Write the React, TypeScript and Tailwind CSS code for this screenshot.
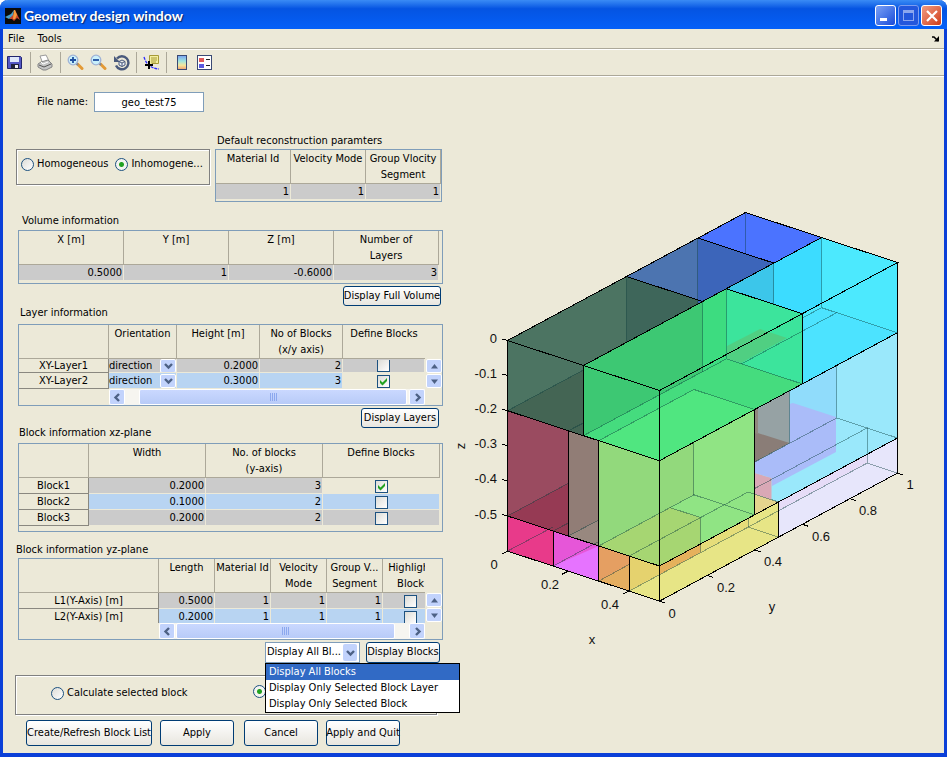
import React from "react";

type Tone = "gray" | "blue" | "none";
type Cell = { kind: "num" | "check" | "select"; value?: string; on?: boolean; tone: Tone };
type Column = { width: string; lines: string[]; open?: boolean };
type Row = { label?: string; cells: Cell[]; short?: boolean };

const toneClass: Record<Tone, string> = {
  gray: "bg-[#cbcbcb]",
  blue: "bg-[#b8d4f2]",
  none: "",
};

const num = (value: string, tone: Tone = "gray"): Cell => ({ kind: "num", value, tone });
const check = (on: boolean, tone: Tone = "gray"): Cell => ({ kind: "check", on, tone });

function Chevron({ dir }: { dir: "down" | "left" | "right" }) {
  const d = { down: "M2 4l3.5 3.5L9 4", left: "M7 2L3.5 5.5L7 9", right: "M4 2l3.5 3.5L4 9" }[dir];
  return (
    <svg viewBox="0 0 11 11" className="size-[11px]" aria-hidden="true">
      <path d={d} fill="none" stroke="#4d6185" strokeWidth="2.4" />
    </svg>
  );
}

function CheckBox({ on, label }: { on?: boolean; label: string }) {
  return (
    <span className="relative block size-[13px] shrink-0">
      <input
        type="checkbox"
        defaultChecked={on}
        aria-label={label}
        className="block size-[13px] appearance-none border border-[#1c5180] bg-linear-to-br from-[#dcdcd7] to-white"
      />
      {on && (
        <svg viewBox="0 0 13 13" className="pointer-events-none absolute inset-0 size-[13px]" aria-hidden="true">
          <path d="M3 5v3l2.5 2.5L10 6V3L5.500 7.500Z" fill="#21a121" />
        </svg>
      )}
    </span>
  );
}

function DirectionSelect({ short }: { short?: boolean }) {
  return (
    <span className={"flex items-center justify-between overflow-hidden " + (short ? "h-[13px]" : "h-[15px]")}>
      <select aria-label="Orientation" className="h-[15px] w-[50px] appearance-none bg-transparent text-[11px] leading-[15px]">
        <option>direction</option>
      </select>
      <span className="flex h-[14px] w-4 shrink-0 items-center justify-center rounded-xs border border-white bg-[#c2d3fc]">
        <Chevron dir="down" />
      </span>
    </span>
  );
}

function GridTable({ caption, width, columns, rows }: { caption: string; width: string; columns: Column[]; rows: Row[] }) {
  const labelled = rows[0].label !== undefined;
  return (
    <table aria-label={caption} className={"shrink-0 table-fixed border-separate border-spacing-0 " + width}>
      <colgroup>
        {columns.map((c, i) => (
          <col key={i} className={c.width} />
        ))}
      </colgroup>
      <thead>
        <tr className="h-[34px]">
          {columns.map((c, i) => (
            <th
              key={i}
              className={
                "border-b border-[#aca899] p-0 pt-px text-center align-top font-normal leading-4 whitespace-nowrap " +
                (c.open ? "" : "border-r")
              }
            >
              {c.lines.map((l) => (
                <div key={l}>{l}</div>
              ))}
            </th>
          ))}
        </tr>
      </thead>
      <tbody>
        {rows.map((r, i) => (
          <tr key={i} className={r.short ? "h-[14px] leading-[13px]" : "h-4 leading-[15px]"}>
            {labelled && <th className="border-r border-b border-[#8a8880] p-0 text-center font-normal">{r.label}</th>}
            {r.cells.map((c, k) => (
              <td
                key={k}
                className={"border-r border-b border-[#ece9d8] bg-clip-padding p-0 text-right " + toneClass[c.tone]}
              >
                {c.kind === "num" && <span className="pr-px">{c.value}</span>}
                {c.kind === "check" && (
                  <span className={"flex items-end justify-center overflow-hidden " + (r.short ? "h-3" : "h-[14px]")}>
                    <CheckBox on={c.on} label={(r.label ?? caption) + " flag"} />
                  </span>
                )}
                {c.kind === "select" && <DirectionSelect short={r.short} />}
              </td>
            ))}
          </tr>
        ))}
      </tbody>
    </table>
  );
}

function Triangle({ up }: { up?: boolean }) {
  return (
    <svg viewBox="0 0 9 7" className="h-[7px] w-[9px]" aria-hidden="true">
      <path d={up ? "M4.500 1L8 5.500H1Z" : "M1 1.500H8L4.500 6Z"} fill="#4d6185" />
    </svg>
  );
}

const scrollKey = "flex items-center justify-center rounded-xs border border-white bg-[#c2d3fc]";

function VerticalScroll() {
  return (
    <div className="flex w-4 shrink-0 flex-col gap-px pt-[34px]">
      <button type="button" aria-label="Scroll up" className={scrollKey + " h-[14px] w-4"}>
        <Triangle up />
      </button>
      <button type="button" aria-label="Scroll down" className={scrollKey + " h-[14px] w-4"}>
        <Triangle />
      </button>
    </div>
  );
}

function HorizontalScroll({ className, thumb }: { className: string; thumb: string }) {
  return (
    <div className={"flex h-4 bg-[#f6f5f0] " + className}>
      <button type="button" aria-label="Scroll left" className={scrollKey + " w-4"}>
        <Chevron dir="left" />
      </button>
      <div className={"flex items-center justify-center gap-px rounded-xs border border-white bg-linear-to-b from-[#cad8ff] to-[#b8cbf8] " + thumb}>
        {[0, 1, 2, 3].map((i) => (
          <span key={i} className="h-2 w-px bg-[#8ca8ee]" />
        ))}
      </div>
      <button type="button" aria-label="Scroll right" className={scrollKey + " ml-auto w-4"}>
        <Chevron dir="right" />
      </button>
    </div>
  );
}

function XpButton({ children, className }: { children: React.ReactNode; className: string }) {
  return (
    <button
      type="button"
      className={
        "flex shrink-0 items-center justify-center rounded-[3px] border border-[#003c74] bg-linear-to-b from-white to-[#e8e6df] whitespace-nowrap " +
        className
      }
    >
      {children}
    </button>
  );
}

function Radio({ label, on, name }: { label: string; on?: boolean; name: string }) {
  return (
    <label className="flex items-center gap-[3px] whitespace-nowrap">
      <input
        type="radio"
        name={name}
        defaultChecked={on}
        className="size-[13px] shrink-0 appearance-none rounded-full border border-[#1c5180] bg-linear-to-br from-[#dcdcd7] to-white checked:bg-[radial-gradient(circle,#21a121_2px,#f4f4f0_3px)]"
      />
      {label}
    </label>
  );
}

const frame = "border border-[#7f9db9]";
const etched = "border border-[#808080] shadow-[1px_1px_0_#fff,inset_1px_1px_0_#fff]";

/* ---- toolbar ---- */

function MatlabLogo() {
  return (
    <svg viewBox="0 0 16 16" className="size-4" aria-hidden="true">
      <rect width="16" height="16" fill="#0a0a0a" />
      <path d="M0 9l4-2 2-1 3-4-1 6-4 3Z" fill="#4aa0c8" />
      <path d="M4 11l4-4 2-5 2 4 3 6-3-2-3 3-2-2Z" fill="#c8442a" />
      <path d="M9 2l1 0 2 5-2 4-2 0Z" fill="#f59a3c" />
    </svg>
  );
}

function ToolButton({ label, children }: { label: string; children: React.ReactNode }) {
  return (
    <button type="button" aria-label={label} className="size-[17px]">
      <svg viewBox="0 0 17 17" className="size-[17px]" aria-hidden="true">
        {children}
      </svg>
    </button>
  );
}

function Divider() {
  return <span className="h-[21px] w-px bg-[#aca899]" />;
}

function Magnifier({ plus }: { plus?: boolean }) {
  return (
    <>
      <path d="M10.500 10L15 14.500" stroke="#e39a35" strokeWidth="3" strokeLinecap="round" />
      <path d="M9 9l2 2" stroke="#7d8796" strokeWidth="2" />
      <circle cx="6" cy="6" r="4.800" fill="#c9f0fb" stroke="#9fb2d6" strokeWidth="1.300" />
      <path d={plus ? "M3 6h6M6 3v6" : "M3 6h6"} stroke="#1f4fa0" strokeWidth="1.800" />
    </>
  );
}

function Toolbar() {
  return (
    <div className="flex h-[27px] items-center border-b border-white pb-0.5 pl-[3px] shadow-[inset_0_-1px_0_#aca899]">
      <ToolButton label="Save">
        <path d="M1.500 2.500h13l1 1v11h-14Z" fill="#5458c4" stroke="#22266e" />
        <rect x="4" y="3" width="9" height="5" fill="#dfe8fb" />
        <rect x="5" y="10" width="8" height="5" fill="#20233a" />
        <rect x="9" y="11" width="3" height="3" fill="#f2f2f2" />
      </ToolButton>
      <div className="flex items-center gap-[6px] pl-[7px]">
        <Divider />
        <ToolButton label="Print">
          <path d="M3 2l6-1 3 6-6 3Z" fill="#fff" stroke="#9a9a9a" />
          <path d="M1 10l3-2 7-2 4 4v3l-6 3H6l-5-3Z" fill="#c4c4c4" stroke="#858585" />
          <path d="M2 11l5 2 7-3" fill="none" stroke="#555" />
          <path d="M4 8l2 2 5-2" fill="none" stroke="#fff" />
        </ToolButton>
        <Divider />
        <ToolButton label="Zoom in">
          <Magnifier plus />
        </ToolButton>
        <ToolButton label="Zoom out">
          <Magnifier />
        </ToolButton>
        <ToolButton label="Rotate 3D">
          <path d="M4 4.500a6.500 6.500 0 1 1-1 7" fill="none" stroke="#4a5a7c" strokeWidth="2.400" />
          <path d="M1 2v6h6Z" fill="#4a5a7c" />
          <path d="M6 7.500l3-1.500 3 1.500v3.500l-3 1.500L6 11ZM6 7.500l3 1.500 3-1.500M9 9v3.500" fill="#e8eef8" stroke="#4a5a7c" />
        </ToolButton>
        <Divider />
        <ToolButton label="Data cursor">
          <path d="M1 3c2 6 5 11 15 12" fill="none" stroke="#2a2aff" strokeWidth="1.300" strokeDasharray="3 1" />
          <path d="M6.500 1.500h9v8H9l-2.500 3Z" fill="#f3efa0" stroke="#a69a38" />
          <path d="M8 4h6M8 6h6M8 8h5" stroke="#a69a38" />
          <path d="M2 11h8M6 7v8" stroke="#000" strokeWidth="2" />
        </ToolButton>
        <Divider />
        <ToolButton label="Insert colorbar">
          <defs>
            <linearGradient id="cb" x1="0" y1="0" x2="0" y2="1">
              <stop offset="0" stopColor="#7aa0f0" />
              <stop offset=".4" stopColor="#9fe6e0" />
              <stop offset=".7" stopColor="#f6e79a" />
              <stop offset="1" stopColor="#f0a070" />
            </linearGradient>
          </defs>
          <rect x="4.500" y="1.500" width="9" height="14" fill="url(#cb)" stroke="#3a4a74" />
        </ToolButton>
        <ToolButton label="Insert legend">
          <rect x="1.500" y="1.500" width="14" height="14" fill="#fff" stroke="#3a4a74" />
          <rect x="3" y="4" width="5" height="4" fill="#e05a5a" />
          <rect x="3" y="10" width="5" height="4" fill="#5a5ae0" />
          <path d="M10 5.500h4M10 11.500h4" stroke="#222" />
        </ToolButton>
      </div>
    </div>
  );
}

/* ---- volume plot ---- */

type P2 = [number, number];
const at = (x: number, y: number, d: number): P2 => [507.5 + 304 * x + 238 * y, 340.5 + 100 * x - 128 * y + 351 * d];

const fills: [string, P2[]][] = [
  // top layer, left row
  ["#4c7462", [at(0, 0, 0), at(0, 0.5, 0), at(0.25, 0.5, 0), at(0.25, 0, 0), at(0.25, 0, 0.2), at(0, 0, 0.2)]],
  ["#3e665a", [at(0, 0.5, 0), at(0.25, 0.5, 0), [626.5, 342.5]]],
  ["#446554", [at(0, 0, 0.2), [583.5, 370], at(0.25, 0, 0.2)]],
  ["#4c74b0", [at(0, 0.5, 0), at(0, 0.8, 0), at(0.25, 0.8, 0), at(0.25, 0.5, 0)]],
  ["#3c65ba", [at(0, 0.8, 0), at(0.25, 0.8, 0), [698, 304]]],
  ["#4b73ff", [at(0, 0.8, 0), at(0, 1, 0), at(0.25, 1, 0), at(0.25, 0.8, 0)]],
  // top layer, cyan
  ["#4ce9fe", [at(0.25, 0.6, 0), at(0.25, 1, 0), at(0.5, 1, 0), at(0.5, 1, 0.2), at(0.5, 0.6, 0.2), at(0.5, 0.6, 0)]],
  ["#3cdcff", [at(0.25, 0.6, 0), at(0.25, 1, 0), [821.5, 303.5], at(0.5, 0.6, 0)]],
  ["#3cc6ea", [at(0.25, 0.6, 0), at(0.25, 0.8, 0), [774, 304.5]]],
  ["#4ce3ff", [[802.3, 318], at(0.25, 1, 0.2), at(0.5, 1, 0.2), at(0.5, 0.6, 0.2)]],
  // top layer, green
  ["#3ddc80", [at(0.25, 0, 0), at(0.25, 0.6, 0), at(0.5, 0.6, 0), at(0.5, 0.6, 0.2), at(0.5, 0, 0.2), at(0.25, 0, 0.2)]],
  ["#3dc873", [at(0.25, 0, 0), at(0.25, 0.5, 0), [702.5, 372], at(0.25, 0, 0.2)]],
  ["#3ce49c", [at(0.25, 0.6, 0), at(0.5, 0.6, 0), at(0.5, 0.6, 0.2), at(0.25, 0.6, 0.2)]],
  ["#45dc7e", [at(0.25, 0, 0.2), at(0.25, 0.6, 0.2), at(0.5, 0.6, 0.2), at(0.5, 0, 0.2)]],
  ["#50e680", [at(0.3, 0, 0.2), at(0.3, 0.4, 0.2), at(0.5, 0.4, 0.2), at(0.5, 0, 0.2)]],
  ["#50cf82", [[727, 346], [760, 329], [787, 338], [741, 363], [727, 359]]],
  // middle layer
  ["#9a4b60", [at(0, 0, 0.2), at(0.2, 0, 0.2), at(0.2, 0, 0.5), at(0, 0, 0.5)]],
  ["#963a54", [at(0, 0, 0.5), [568.3, 483.3], at(0.2, 0, 0.5)]],
  ["#917d76", [at(0.2, 0, 0.2), at(0.3, 0, 0.2), at(0.3, 0, 0.5), at(0.2, 0, 0.5)]],
  ["#98887f", [at(0.2, 0, 0.5), [598.7, 520], at(0.3, 0, 0.5)]],
  ["#90e484", [at(0.3, 0, 0.2), at(0.5, 0, 0.2), at(0.5, 0.4, 0.2), at(0.5, 0.4, 0.5), at(0.5, 0, 0.5), at(0.3, 0, 0.5)]],
  ["#92d97c", [at(0.3, 0, 0.2), at(0.5, 0, 0.2), [694, 442], at(0.3, 0.4, 0.5), at(0.3, 0, 0.5)]],
  ["#a6d672", [at(0.3, 0, 0.5), at(0.3, 0.3, 0.5), at(0.4, 0.3, 0.5), [700.5, 544], at(0.5, 0, 0.5)]],
  ["#9ae8fb", [at(0.5, 0.4, 0.2), at(0.5, 1, 0.2), at(0.5, 1, 0.5), at(0.5, 0.4, 0.5)]],
  ["#90dcfb", [[789.5, 391], [836.5, 366], [836.5, 418], [789.5, 443]]],
  ["#aabcf9", [[755, 462], [789.5, 443], [789.5, 404], [793, 403], [836, 417], [836, 452], [772, 486], [771.5, 478], [755, 473]]],
  ["#96a2a4", [[754.7, 410], [789.5, 391], [789.5, 443], [754.7, 462]]],
  ["#8a7d77", [[754.7, 432], [789.5, 443], [754.7, 462]]],
  ["#91887e", [[754.7, 410], [758, 408], [758, 434], [754.7, 433]]],
  ["#d9a8b6", [[754.7, 473], [771.5, 478], [771.5, 500], [754.7, 494]]],
  ["#e5d48e", [[754.7, 494], [778.5, 502], [754.7, 515]]],
  // bottom layer
  ["#e83a8a", [at(0, 0, 0.5), at(0.15, 0, 0.5), at(0.15, 0, 0.6), at(0, 0, 0.6)]],
  ["#e673ff", [at(0.15, 0, 0.5), at(0.3, 0, 0.5), at(0.3, 0, 0.6), at(0.15, 0, 0.6)]],
  ["#e656d8", [at(0.15, 0, 0.5), at(0.3, 0, 0.5), at(0.15, 0, 0.6)]],
  ["#e5ae60", [at(0.3, 0, 0.5), at(0.4, 0, 0.5), at(0.4, 0, 0.6), at(0.3, 0, 0.6)]],
  ["#e59f62", [at(0.3, 0, 0.5), at(0.4, 0, 0.5), [629, 564.5], at(0.3, 0, 0.6)]],
  ["#e7e586", [at(0.4, 0, 0.5), at(0.5, 0, 0.5), at(0.5, 0.5, 0.5), at(0.5, 0.5, 0.6), at(0.5, 0, 0.6), at(0.4, 0, 0.6)]],
  ["#e5d26e", [at(0.4, 0, 0.5), at(0.5, 0, 0.5), [659.5, 574.5], at(0.4, 0, 0.6)]],
  ["#e5dd7a", [at(0.5, 0, 0.5), [748.1, 518.5], [748.1, 527], [659.5, 574.5]]],
  ["#e5b15c", [at(0.5, 0, 0.5), [700.5, 544], [700.5, 552.5], [659.5, 574.5]]],
  ["#e7e6fb", [at(0.5, 0.5, 0.5), at(0.5, 1, 0.5), at(0.5, 1, 0.6), at(0.5, 0.5, 0.6)]],
  ["#e6dcf7", [at(0.5, 0.5, 0.5), [867.1, 454.5], [867.1, 463], [778.5, 510.5]]],
];

const hidden: P2[][] = [
  [at(0, 0.5, 0), [626.5, 342.5]],
  [at(0, 0, 0.2), [583.5, 370]],
  [at(0.2, 0, 0.2), [583.5, 423]],
  [at(0, 0.8, 0), [698, 304]],
  [at(0, 1, 0), [745.5, 253]],
  [at(0.25, 0.8, 0), [773.9, 304]],
  [at(0.25, 1, 0), at(0.25, 1, 0.2), at(0.5, 1, 0.2)],
  [at(0.25, 0.5, 0), [702.5, 372]],
  [at(0.25, 0.6, 0), at(0.25, 0.6, 0.2), at(0.5, 0.6, 0.2)],
  [at(0.25, 0, 0.2), at(0.25, 0.6, 0.2)],
  [[802.3, 318], at(0.25, 1, 0.2)],
  [at(0.3, 0, 0.2), at(0.3, 0.4, 0.2), at(0.5, 0.4, 0.2)],
  [at(0.3, 0.6, 0.2), at(0.3, 1, 0.2)],
  [[836.7, 366], at(0.3, 1, 0.5), at(0.5, 1, 0.5)],
  [at(0.3, 1, 0.5), [754.7, 462]],
  [[693.9, 442], at(0.3, 0.4, 0.5), at(0.5, 0.4, 0.5)],
  [at(0.3, 0, 0.5), at(0.3, 0.4, 0.5)],
  [at(0.3, 0.3, 0.5), at(0.4, 0.3, 0.5), [700.5, 552]],
  [at(0, 0, 0.5), [568.3, 483.3]],
  [at(0.15, 0, 0.5), [568.3, 523]],
  [at(0.2, 0, 0.5), [598.7, 520]],
  [at(0.4, 0, 0.5), at(0.4, 0.5, 0.5), at(0.5, 0.5, 0.5)],
  [[754.7, 488.5], at(0.4, 1, 0.5), at(0.4, 1, 0.6), at(0.5, 1, 0.6)],
  [[789.5, 391], [789.5, 443]],
  [at(0, 0, 0.6), [553, 527]],
  [at(0.15, 0, 0.6), [598.7, 541.5]],
  [at(0.3, 0, 0.6), [629, 564.5]],
  [at(0.4, 0, 0.6), at(0.4, 0.5, 0.6), at(0.5, 0.5, 0.6)],
  [[748.1, 518.5], [748.1, 527]],
  [at(0.4, 0.5, 0.6), at(0.4, 1, 0.6)],
];

const solid: P2[][] = [
  [at(0, 0, 0), at(0, 1, 0), at(0.5, 1, 0), at(0.5, 0, 0), at(0, 0, 0)],
  [at(0, 0, 0), at(0, 0, 0.6), at(0.5, 0, 0.6), at(0.5, 1, 0.6), at(0.5, 1, 0)],
  [at(0.5, 0, 0), at(0.5, 0, 0.6)],
  [at(0.25, 0, 0.2), at(0.25, 0, 0), at(0.25, 1, 0)],
  [at(0, 0.5, 0), at(0.25, 0.5, 0)],
  [at(0, 0.8, 0), at(0.25, 0.8, 0)],
  [at(0.25, 0.6, 0), at(0.5, 0.6, 0), at(0.5, 0.6, 0.2)],
  [at(0, 0, 0.2), at(0.5, 0, 0.2), at(0.5, 1, 0.2)],
  [at(0, 0, 0.5), at(0.5, 0, 0.5), at(0.5, 1, 0.5)],
  [at(0.2, 0, 0.2), at(0.2, 0, 0.5)],
  [at(0.3, 0, 0.2), at(0.3, 0, 0.6)],
  [at(0.5, 0.4, 0.2), at(0.5, 0.4, 0.5)],
  [at(0.15, 0, 0.5), at(0.15, 0, 0.6)],
  [at(0.4, 0, 0.5), at(0.4, 0, 0.6)],
  [at(0.5, 0.5, 0.5), at(0.5, 0.5, 0.6)],
];

const pts = (list: P2[]) => list.map((p) => p.join(",")).join(" ");

const zTicks = ["0", "-0.1", "-0.2", "-0.3", "-0.4", "-0.5"];
const xTicks: [string, number, number][] = [["0", 494, 569], ["0.2", 550, 589], ["0.4", 610, 609]];
const yTicks: [string, number, number][] = [["0", 672, 618], ["0.2", 726, 592], ["0.4", 773, 566], ["0.6", 821, 541], ["0.8", 868, 515], ["1", 910, 489]];

function VolumePlot() {
  return (
    <svg viewBox="450 190 494 460" className="h-auto w-full text-[13px]" role="img" aria-label="Block volume">
      {fills.map(([c, p], i) => (
        <polygon key={i} points={pts(p)} fill={c} />
      ))}
      <g fill="none" stroke="#0c3c3c" strokeOpacity="0.42" shapeRendering="crispEdges">
        {hidden.map((p, i) => (
          <polyline key={i} points={pts(p)} />
        ))}
      </g>
      <g fill="none" stroke="#000" shapeRendering="crispEdges">
        {solid.map((p, i) => (
          <polyline key={i} points={pts(p)} />
        ))}
      </g>
      <g fill="#111">
        {zTicks.map((t, i) => (
          <g key={t}>
            <path d={`M502 ${340 + i * 35.1 - 1}l6 1.500`} stroke="#000" shapeRendering="crispEdges" />
            <text x="497" y={343 + i * 35.1} textAnchor="end">{t}</text>
          </g>
        ))}
        {xTicks.map(([t, x, y], i) => {
          const [a, b] = at(i * 0.2, 0, 0.6);
          return (
            <g key={t}>
              <path d={`M${a} ${b}l-6 3`} stroke="#000" shapeRendering="crispEdges" />
              <text x={x} y={y} textAnchor="middle">{t}</text>
            </g>
          );
        })}
        {yTicks.map(([t, x, y], i) => {
          const [a, b] = at(0.5, i * 0.2, 0.6);
          return (
            <g key={t}>
              <path d={`M${a} ${b}l6 2`} stroke="#000" shapeRendering="crispEdges" />
              <text x={x} y={y} textAnchor="middle">{t}</text>
            </g>
          );
        })}
        <text x="592" y="644" textAnchor="middle">x</text>
        <text x="772" y="611" textAnchor="middle">y</text>
        <text x="465" y="446" textAnchor="middle" transform="rotate(-90 465 446)">z</text>
      </g>
    </svg>
  );
}

/* ---- window ---- */

export default function App() {
  return (
    <div className="flex min-h-screen flex-col rounded-t-lg border-x-[3px] border-b-4 border-[#0a3fd8] bg-[#ece9d8] font-['DejaVu_Sans_Condensed','DejaVu_Sans',sans-serif] text-[11px] text-black">
      <header className="-mx-[3px] flex h-[29px] items-center justify-between rounded-t-lg bg-linear-to-b from-[#3a8bf5] via-[#0554e2] via-30% to-[#0560f8] pr-[5px] pl-[5px]">
        <div className="flex items-center gap-[3px] pt-0.5">
          <MatlabLogo />
          <h1 className="font-['Lato',sans-serif] text-[14px] font-bold text-white [text-shadow:1px_1px_1px_#0a246a]">Geometry design window</h1>
        </div>
        <div className="flex gap-0.5 pt-0.5">
          <button type="button" aria-label="Minimize" className="flex size-[21px] items-end rounded-[3px] border border-white bg-linear-to-br from-[#7ba0f5] to-[#1a48d8] pb-1 pl-1">
            <span className="h-[3px] w-[7px] bg-white" />
          </button>
          <button type="button" aria-label="Maximize" className="flex size-[21px] items-center justify-center rounded-[3px] border border-[#7c9cf0] bg-[#2457dc]">
            <span className="size-[11px] border border-t-[3px] border-[#8ca6ee]" />
          </button>
          <button type="button" aria-label="Close" className="flex size-[21px] items-center justify-center rounded-[3px] border border-white bg-linear-to-br from-[#f09a80] to-[#d03a10]">
            <svg viewBox="0 0 12 12" className="size-3" aria-hidden="true">
              <path d="M1 1l10 10M11 1L1 11" stroke="#fff" strokeWidth="2.200" />
            </svg>
          </button>
        </div>
      </header>

      <nav className="flex h-[21px] items-center justify-between border-b border-white pr-1 pl-[5px] shadow-[inset_0_-1px_0_#aca899]">
        <div className="flex gap-[13px]">
          <button type="button">File</button>
          <button type="button">Tools</button>
        </div>
        <svg viewBox="0 0 8 6" className="h-[6px] w-2" aria-hidden="true">
          <path d="M0 1h2L6 5" fill="none" stroke="#000" strokeWidth="1.500" />
          <path d="M7 0v5.500H2Z" fill="#000" />
        </svg>
      </nav>

      <Toolbar />

      <main className="flex grow items-start">
        <div className="w-[447px] shrink-0 pl-[15px]">
          <div className="flex items-center gap-[6px] pt-[15px] pl-[19px]">
            <label htmlFor="fname">File name:</label>
            <input id="fname" defaultValue="geo_test75" className="h-5 w-[110px] border border-[#7f9db9] bg-white text-center" />
          </div>

          <div className="flex items-end gap-[5px] pt-[21px]">
            <div className={"mb-[17px] -ml-0.5 flex h-9 w-[194px] pt-[5px] pl-1 " + etched}>
              <div className="flex h-[18px] items-center gap-[7px]">
                <Radio name="kind" label="Homogeneous" />
                <Radio name="kind" label="Inhomogene..." on />
              </div>
            </div>
            <div>
              <div className="h-4 pl-0.5 leading-4">Default reconstruction paramters</div>
              <div className={"h-[53px] w-[227px] " + frame}>
                <GridTable
                  caption="Default reconstruction paramters"
                  width="w-[225px]"
                  columns={[
                    { width: "w-[75px]", lines: ["Material Id"] },
                    { width: "w-[75px]", lines: ["Velocity Mode"] },
                    { width: "w-[75px]", lines: ["Group Vlocity", "Segment"] },
                  ]}
                  rows={[{ cells: [num("1"), num("1"), num("1")] }]}
                />
              </div>
            </div>
          </div>

          <div className="h-[28px] pt-[11px] pl-1 leading-4">Volume information</div>
          <div className={"h-[54px] w-[425px] " + frame}>
            <GridTable
              caption="Volume information"
              width="w-[420px]"
              columns={[
                { width: "w-[105px]", lines: ["X [m]"] },
                { width: "w-[105px]", lines: ["Y [m]"] },
                { width: "w-[105px]", lines: ["Z [m]"] },
                { width: "w-[105px]", lines: ["Number of", "Layers"] },
              ]}
              rows={[{ cells: [num("0.5000"), num("1"), num("-0.6000"), num("3")] }]}
            />
          </div>

          <div className="flex h-[40px] w-[423px] justify-between">
            <div className="self-end pb-1 pl-0.5 leading-[14px]">Layer information</div>
            <XpButton className="mt-0.5 h-5 w-[98px]">Display Full Volume</XpButton>
          </div>
          <div className={"h-[82px] w-[425px] " + frame}>
            <div className="flex h-16 gap-px">
              <GridTable
                caption="Layer information"
                width="w-[406px]"
                columns={[
                  { width: "w-[90px]", lines: [""] },
                  { width: "w-[68px]", lines: ["Orientation"] },
                  { width: "w-[83px]", lines: ["Height [m]"] },
                  { width: "w-[83px]", lines: ["No of Blocks", "(x/y axis)"] },
                  { width: "w-[82px]", lines: ["Define Blocks"], open: true },
                ]}
                rows={[
                  { label: "XY-Layer1", short: true, cells: [{ kind: "select", tone: "gray" }, num("0.2000"), num("2"), check(false)] },
                  { label: "XY-Layer2", cells: [{ kind: "select", tone: "blue" }, num("0.3000", "blue"), num("3", "blue"), check(true, "none")] },
                ]}
              />
              <VerticalScroll />
            </div>
            <HorizontalScroll className="ml-[90px] w-[316px]" thumb="ml-[14px] w-[268px]" />
          </div>

          <div className="flex h-[37px] w-[421px] justify-between">
            <div className="self-end pb-[3px] pl-px leading-[14px]">Block information xz-plane</div>
            <XpButton className="mt-0.5 h-5 w-[78px]">Display Layers</XpButton>
          </div>
          <div className={"h-[89px] w-[425px] " + frame}>
            <GridTable
              caption="Block information xz-plane"
              width="w-[421px]"
              columns={[
                { width: "w-[70px]", lines: [""] },
                { width: "w-[117px]", lines: ["Width"] },
                { width: "w-[117px]", lines: ["No. of blocks", "(y-axis)"] },
                { width: "w-[117px]", lines: ["Define Blocks"] },
              ]}
              rows={[
                { label: "Block1", cells: [num("0.2000"), num("3"), check(true, "none")] },
                { label: "Block2", cells: [num("0.1000", "blue"), num("2", "blue"), check(false, "blue")] },
                { label: "Block3", cells: [num("0.2000"), num("2"), check(false)] },
              ]}
            />
          </div>

          <div className="-ml-0.5 h-[26px] pt-[10px] leading-4">Block information yz-plane</div>
          <div className={"h-[82px] w-[425px] " + frame}>
            <div className="flex h-16 gap-px">
              <div className="h-16 w-[406px] overflow-hidden">
                <GridTable
                  caption="Block information yz-plane"
                  width="w-[420px]"
                  columns={[
                    { width: "w-[140px]", lines: [""] },
                    { width: "w-[56px]", lines: ["Length"] },
                    { width: "w-[56px]", lines: ["Material Id"] },
                    { width: "w-[56px]", lines: ["Velocity", "Mode"] },
                    { width: "w-[56px]", lines: ["Group V...", "Segment"] },
                    { width: "w-[56px]", lines: ["Highlight", "Block"] },
                  ]}
                  rows={[
                    { label: "L1(Y-Axis) [m]", cells: [num("0.5000"), num("1"), num("1"), num("1"), check(false)] },
                    { label: "L2(Y-Axis) [m]", cells: [num("0.2000", "blue"), num("1", "blue"), num("1", "blue"), num("1", "blue"), check(false, "blue")] },
                  ]}
                />
              </div>
              <VerticalScroll />
            </div>
            <HorizontalScroll className="ml-[140px] w-[266px]" thumb="ml-px w-[219px]" />
          </div>

          <div className="relative flex w-[422px] justify-end gap-[6px] pt-0.5">
            <div className="flex h-[21px] w-[95px] items-center border border-[#7f9db9] bg-white pr-px">
              <select aria-label="Display mode" className="w-[77px] appearance-none pl-px text-[11px]">
                <option>Display All Bl...</option>
              </select>
              <span className="flex h-[17px] w-[14px] items-center justify-center rounded-xs bg-[#c2d3fc]">
                <Chevron dir="down" />
              </span>
            </div>
            <XpButton className="h-[21px] w-[74px]">Display Blocks</XpButton>
            <ul role="listbox" aria-label="Display mode choices" className="absolute top-[23px] left-[247px] z-10 h-[50px] w-[195px] border border-black bg-white leading-4 whitespace-nowrap">
              <li role="option" aria-selected="true" className="bg-[#316ac5] pl-[3px] text-white">Display All Blocks</li>
              <li role="option" aria-selected="false" className="pl-[3px]">Display Only Selected Block Layer</li>
              <li role="option" aria-selected="false" className="pl-[3px]">Display Only Selected Block</li>
            </ul>
          </div>

          <div className={"mt-3 -ml-[3px] flex h-10 w-[422px] items-start gap-[65px] pt-[9px] pl-[35px] " + etched}>
            <Radio name="calc" label="Calculate selected block" />
            <Radio name="calc" label="" on />
          </div>

          <div className="flex pt-[5px] pl-2">
            <XpButton className="h-[26px] w-[126px]">Create/Refresh Block List</XpButton>
            <XpButton className="ml-2 h-[26px] w-[74px]">Apply</XpButton>
            <XpButton className="ml-[10px] h-[26px] w-[74px]">Cancel</XpButton>
            <XpButton className="ml-2 h-[26px] w-[74px]">Apply and Quit</XpButton>
          </div>
        </div>

        <section className="min-w-0 grow pt-[113px] font-['Liberation_Sans',sans-serif]">
          <VolumePlot />
        </section>
      </main>
    </div>
  );
}
